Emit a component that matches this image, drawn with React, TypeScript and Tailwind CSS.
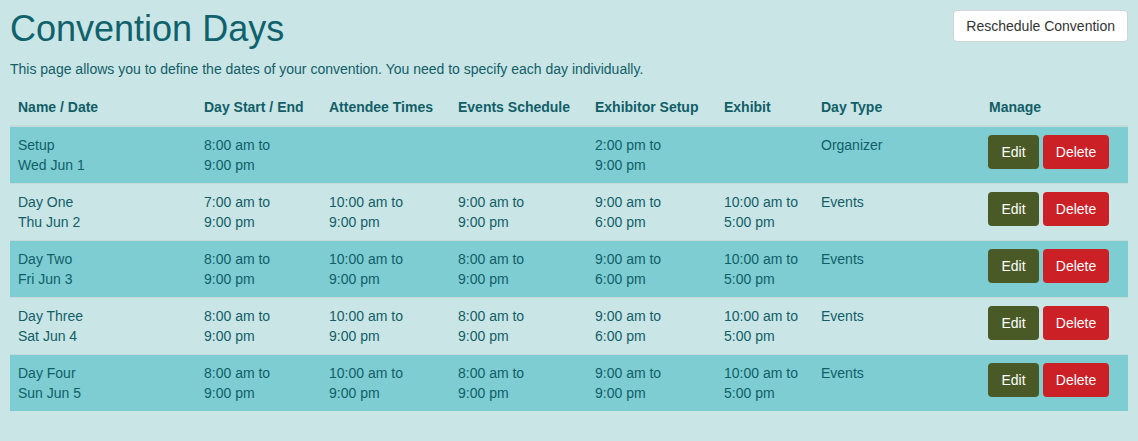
const days = [
  { name: "Setup", date: "Wed Jun 1", day: ["8:00 am to", "9:00 pm"], attendee: null, events: null, exSetup: ["2:00 pm to", "9:00 pm"], exhibit: null, type: "Organizer" },
  { name: "Day One", date: "Thu Jun 2", day: ["7:00 am to", "9:00 pm"], attendee: ["10:00 am to", "9:00 pm"], events: ["9:00 am to", "9:00 pm"], exSetup: ["9:00 am to", "6:00 pm"], exhibit: ["10:00 am to", "5:00 pm"], type: "Events" },
  { name: "Day Two", date: "Fri Jun 3", day: ["8:00 am to", "9:00 pm"], attendee: ["10:00 am to", "9:00 pm"], events: ["8:00 am to", "9:00 pm"], exSetup: ["9:00 am to", "6:00 pm"], exhibit: ["10:00 am to", "5:00 pm"], type: "Events" },
  { name: "Day Three", date: "Sat Jun 4", day: ["8:00 am to", "9:00 pm"], attendee: ["10:00 am to", "9:00 pm"], events: ["8:00 am to", "9:00 pm"], exSetup: ["9:00 am to", "6:00 pm"], exhibit: ["10:00 am to", "5:00 pm"], type: "Events" },
  { name: "Day Four", date: "Sun Jun 5", day: ["8:00 am to", "9:00 pm"], attendee: ["10:00 am to", "9:00 pm"], events: ["8:00 am to", "9:00 pm"], exSetup: ["9:00 am to", "9:00 pm"], exhibit: ["10:00 am to", "5:00 pm"], type: "Events" },
];

function Lines({ v }: { v: string[] | null }) {
  if (!v) return null;
  return (
    <>
      <span className="block">{v[0]}</span>
      <span className="block">{v[1]}</span>
    </>
  );
}

export default function App() {
  return (
    <div className="min-h-[441px] bg-[#cae5e6] text-[#115e67] px-[10px] pt-[7px] pb-[30px] font-['Liberation_Sans',Arial,sans-serif]">
      <div className="flex items-start justify-between">
        <h1 className="text-[36px] leading-[43px] font-normal text-[#0f626b]">Convention Days</h1>
        <button className="mt-[3px] h-[32px] px-3 bg-white border border-[#cfd4d6] rounded text-sm text-[#333] leading-5">
          Reschedule Convention
        </button>
      </div>
      <p className="mt-[9px] text-sm leading-5">
        This page allows you to define the dates of your convention. You need to specify each day individually.
      </p>
      <table className="mt-[10px] w-full table-fixed border-collapse text-sm leading-5">
        <colgroup>
          <col className="w-[186px]" />
          <col className="w-[125px]" />
          <col className="w-[129px]" />
          <col className="w-[137px]" />
          <col className="w-[129px]" />
          <col className="w-[97px]" />
          <col className="w-[168px]" />
          <col className="w-[147px]" />
        </colgroup>
        <thead>
          <tr className="border-b-2 border-[#c3d9da]">
            {["Name / Date", "Day Start / End", "Attendee Times", "Events Schedule", "Exhibitor Setup", "Exhibit", "Day Type", "Manage"].map((h) => (
              <th key={h} className="text-left font-bold px-2 py-2 align-bottom">{h}</th>
            ))}
          </tr>
        </thead>
        <tbody>
          {days.map((d, i) => (
            <tr key={d.name} className={`border-t border-[#c3d9da] ${i % 2 === 0 ? "bg-[#7dcdd3]" : ""}`}>
              <td className="px-2 py-2 align-top">
                <span className="block">{d.name}</span>
                <span className="block">{d.date}</span>
              </td>
              <td className="px-2 py-2 align-top"><Lines v={d.day} /></td>
              <td className="px-2 py-2 align-top"><Lines v={d.attendee} /></td>
              <td className="px-2 py-2 align-top"><Lines v={d.events} /></td>
              <td className="px-2 py-2 align-top"><Lines v={d.exSetup} /></td>
              <td className="px-2 py-2 align-top"><Lines v={d.exhibit} /></td>
              <td className="px-2 py-2 align-top">{d.type}</td>
              <td className="pl-[7px] pr-2 py-2 align-top">
                <div className="flex gap-1">
                  <button className="h-[34px] w-[51px] rounded bg-[#4a5a26] text-white text-sm">Edit</button>
                  <button className="h-[34px] w-[66px] rounded bg-[#cc2027] text-white text-sm">Delete</button>
                </div>
              </td>
            </tr>
          ))}
        </tbody>
      </table>
    </div>
  );
}
